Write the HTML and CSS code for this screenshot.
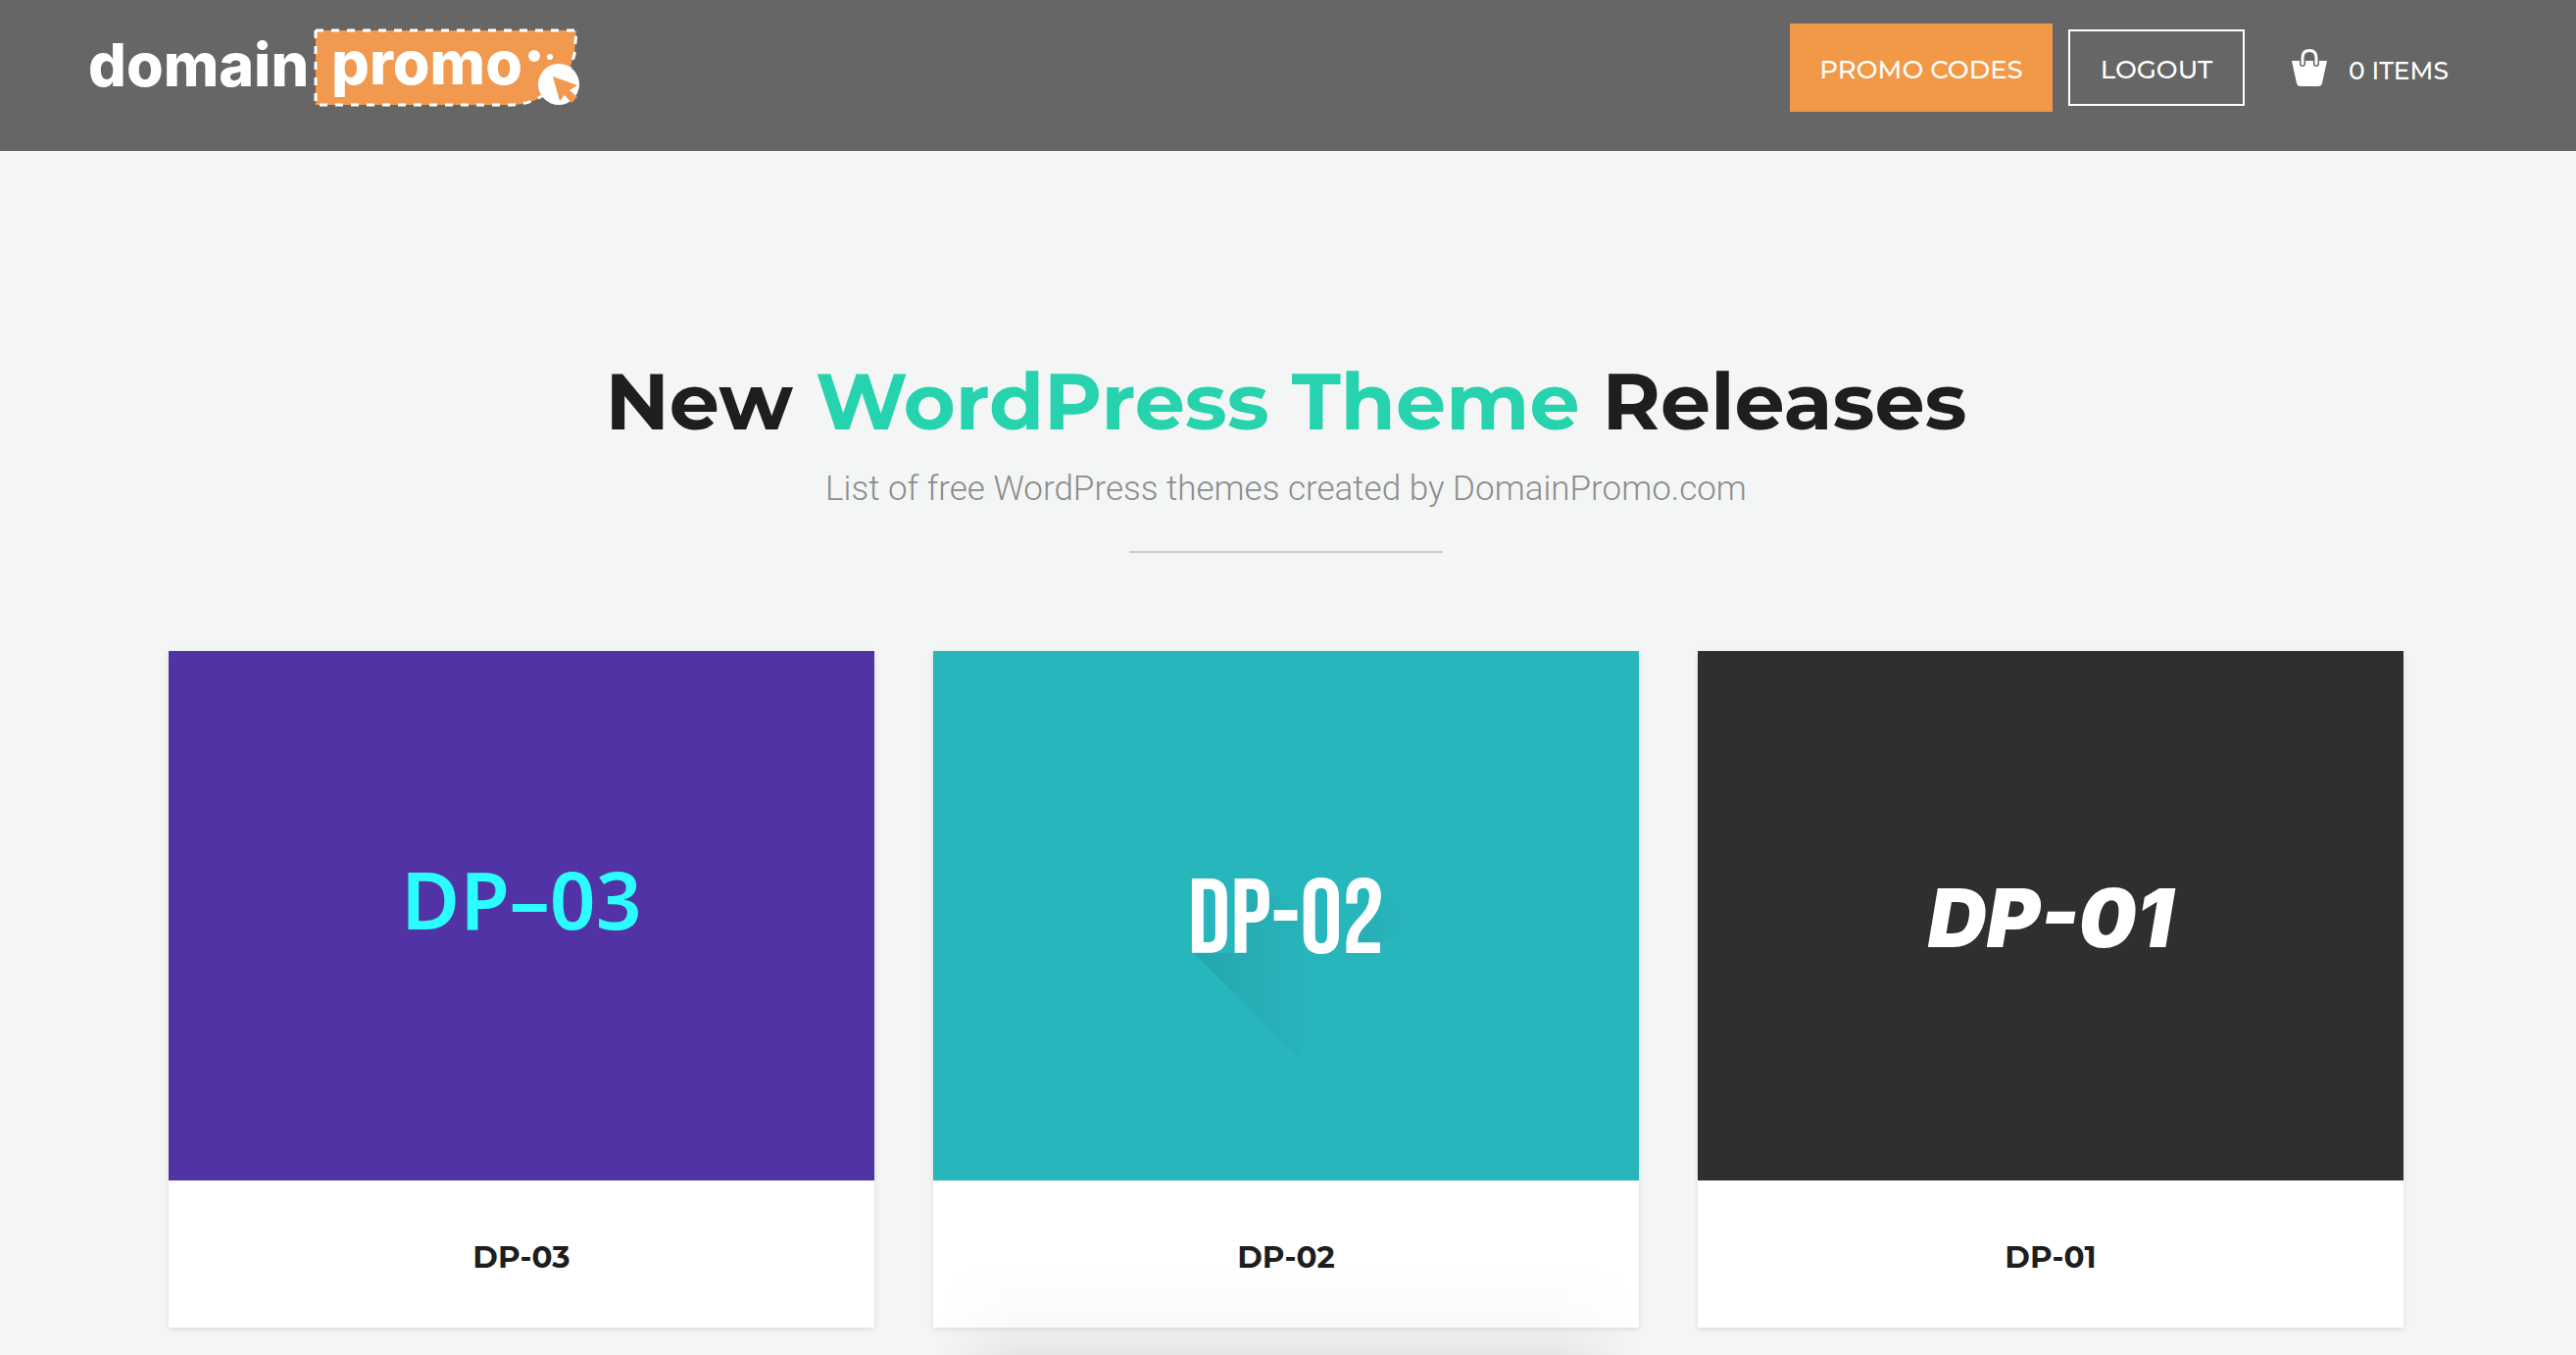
FILE: index.html
```html
<!DOCTYPE html>
<html lang="en">
<head>
<meta charset="utf-8">
<title>Domain Promo – WordPress Themes</title>
<link rel="stylesheet" href="styles.css">
</head>
<body>
<header class="site-header">
  <a class="logo" href="#">
    <svg width="520" height="124" viewBox="-8 -20 520 124" role="img" aria-label="domain promo">
      <path d="M230 1H496L494 26L489 40L462 68Q448 77 428 77H230Z" fill="#f29950"/>
      <path d="M230 1H496L494 26L488 44" fill="none" stroke="#fff" stroke-width="3" stroke-dasharray="8 8"/>
      <path d="M230 1V77H428Q448 77 464 66" fill="none" stroke="#fff" stroke-width="3" stroke-dasharray="8 8"/>
      <text class="logo-text" x="-2" y="58">domain</text>
      <text class="logo-text" x="246" y="56">promo</text>
      <circle cx="453" cy="27" r="6" fill="#fff"/>
      <circle cx="469" cy="28" r="3" fill="#fff"/>
      <circle cx="478" cy="56" r="21" fill="#fff"/>
      <path d="M472 48L497 57L489 62L497 69L491 75L484 67L479 73Z" fill="#f29950"/>
    </svg>
  </a>
  <nav class="actions">
    <a class="btn btn-promo" href="#">PROMO CODES</a>
    <a class="btn btn-outline" href="#">LOGOUT</a>
    <a class="cart" href="#">
      <svg width="36" height="38" viewBox="0 0 36 38" aria-hidden="true">
        <path d="M0 12H36L31 35Q30 38 27 38H9Q6 38 5 35Z" fill="#fff"/>
        <path d="M11 15V9Q11 1.500 18 1.500T25 9V15" fill="none" stroke="#666" stroke-width="6" stroke-linecap="round"/>
        <path d="M11 15V9Q11 1.500 18 1.500T25 9V15" fill="none" stroke="#fff" stroke-width="3" stroke-linecap="round"/>
      </svg>
      <span class="cart-count">0 ITEMS</span>
    </a>
  </nav>
</header>
<main class="releases">
  <h1 class="title">New <span class="accent">WordPress Theme</span> Releases</h1>
  <p class="subtitle">List of free WordPress themes created by DomainPromo.com</p>
  <hr class="rule">
  <div class="grid">
    <a class="card" href="#">
      <div class="cover cover-violet"><span>DP–03</span></div>
      <h2 class="name">DP-03</h2>
    </a>
    <a class="card card-raised" href="#">
      <div class="cover cover-teal">
        <svg class="long-shadow" viewBox="0 0 720 540" aria-hidden="true">
          <defs>
            <linearGradient id="fade" gradientUnits="userSpaceOnUse" x1="290" y1="0" x2="400" y2="0">
              <stop offset="0" stop-color="#000" stop-opacity="0.07"/>
              <stop offset="1" stop-color="#000" stop-opacity="0"/>
            </linearGradient>
            <linearGradient id="fade-tip" gradientUnits="userSpaceOnUse" x1="440" y1="0" x2="490" y2="0">
              <stop offset="0" stop-color="#000" stop-opacity="0.04"/>
              <stop offset="1" stop-color="#000" stop-opacity="0"/>
            </linearGradient>
          </defs>
          <path d="M266 308L374 416L410 300L336 238H310V308Z" fill="url(#fade)"/>
          <path d="M452 238L490 276L454 300H430Z" fill="url(#fade-tip)"/>
        </svg>
        <span class="cover-label">DP-02</span>
      </div>
      <h2 class="name">DP-02</h2>
    </a>
    <a class="card" href="#">
      <div class="cover cover-dark"><span>DP-01</span></div>
      <h2 class="name">DP-01</h2>
    </a>
  </div>
</main>
</body>
</html>
```
FILE: styles.css
```css
* { box-sizing: border-box; }
body {
  margin: 0;
  background: #f4f6f5;
  color: #1e1e1e;
  font-family: Montserrat, Inter, "Liberation Sans", sans-serif;
}
a { color: inherit; text-decoration: none; }
.site-header {
  display: flex;
  justify-content: space-between;
  align-items: flex-start;
  height: 154px;
  padding: 10px 130px 0 84px;
  background: #666;
  color: #fff;
}
.logo svg { display: block; }
.logo-text { font: 800 61px Inter, sans-serif; fill: #fff; }
.actions { display: flex; align-items: center; padding-top: 14px; font-size: 26px; font-weight: 500; }
.btn { display: flex; align-items: center; justify-content: center; padding-top: 4px; }
.btn-promo { width: 268px; height: 90px; margin-right: 16px; background: #f29947; }
.btn-outline { width: 180px; height: 78px; border: 2px solid #fff; }
.cart { display: flex; align-items: center; gap: 22px; margin-left: 48px; font-size: 25px; }
.cart-count { padding-top: 6px; }
.releases { padding: 204px 176px 28px 172px; text-align: center; }
.title { margin: 0; padding-top: 2px; font-size: 81px; line-height: 98px; font-weight: 700; }
.accent { color: #26d3ae; }
.subtitle {
  margin: 17px 0 0;
  color: #8c8c8c;
  font: 300 35px/48px Roboto, sans-serif;
}
.rule { width: 320px; height: 2px; margin: 39px auto 100px; border: 0; background: #ccc; }
.grid { display: grid; grid-template-columns: repeat(3, 1fr); gap: 60px; }
.card { position: relative; background: #fff; box-shadow: 0 2px 6px rgba(0, 0, 0, 0.1); }
/* soft ambient shade under the middle card */
.card-raised::after {
  content: "";
  position: absolute;
  inset: auto 0 -28px;
  height: 100px;
  background: linear-gradient(transparent, rgba(0, 0, 0, 0.02) 70%, rgba(0, 0, 0, 0.06));
  mask-image: linear-gradient(90deg, transparent, #000 12%, #000 88%, transparent);
  pointer-events: none;
}
.cover { position: relative; display: flex; align-items: center; justify-content: center; aspect-ratio: 4 / 3; }
.cover-violet { padding-bottom: 36px; background: #5233a5; color: #2bfdff; font: 600 82px "Noto Sans", sans-serif; }
.cover-teal { padding-top: 10px; background: #28b6bd; color: #fff; font: 400 108px "Bebas Neue", "Roboto Condensed", sans-serif; }
.cover-dark { padding-top: 4px; background: #2f2f2f; color: #fff; font: italic 900 83px Inter, sans-serif; }
.long-shadow { position: absolute; inset: 0; width: 100%; height: 100%; }
.cover-label { position: relative; }
.name { margin: 0; padding: 58px 0 52px; font-size: 31px; line-height: 40px; font-weight: 700; }
```
